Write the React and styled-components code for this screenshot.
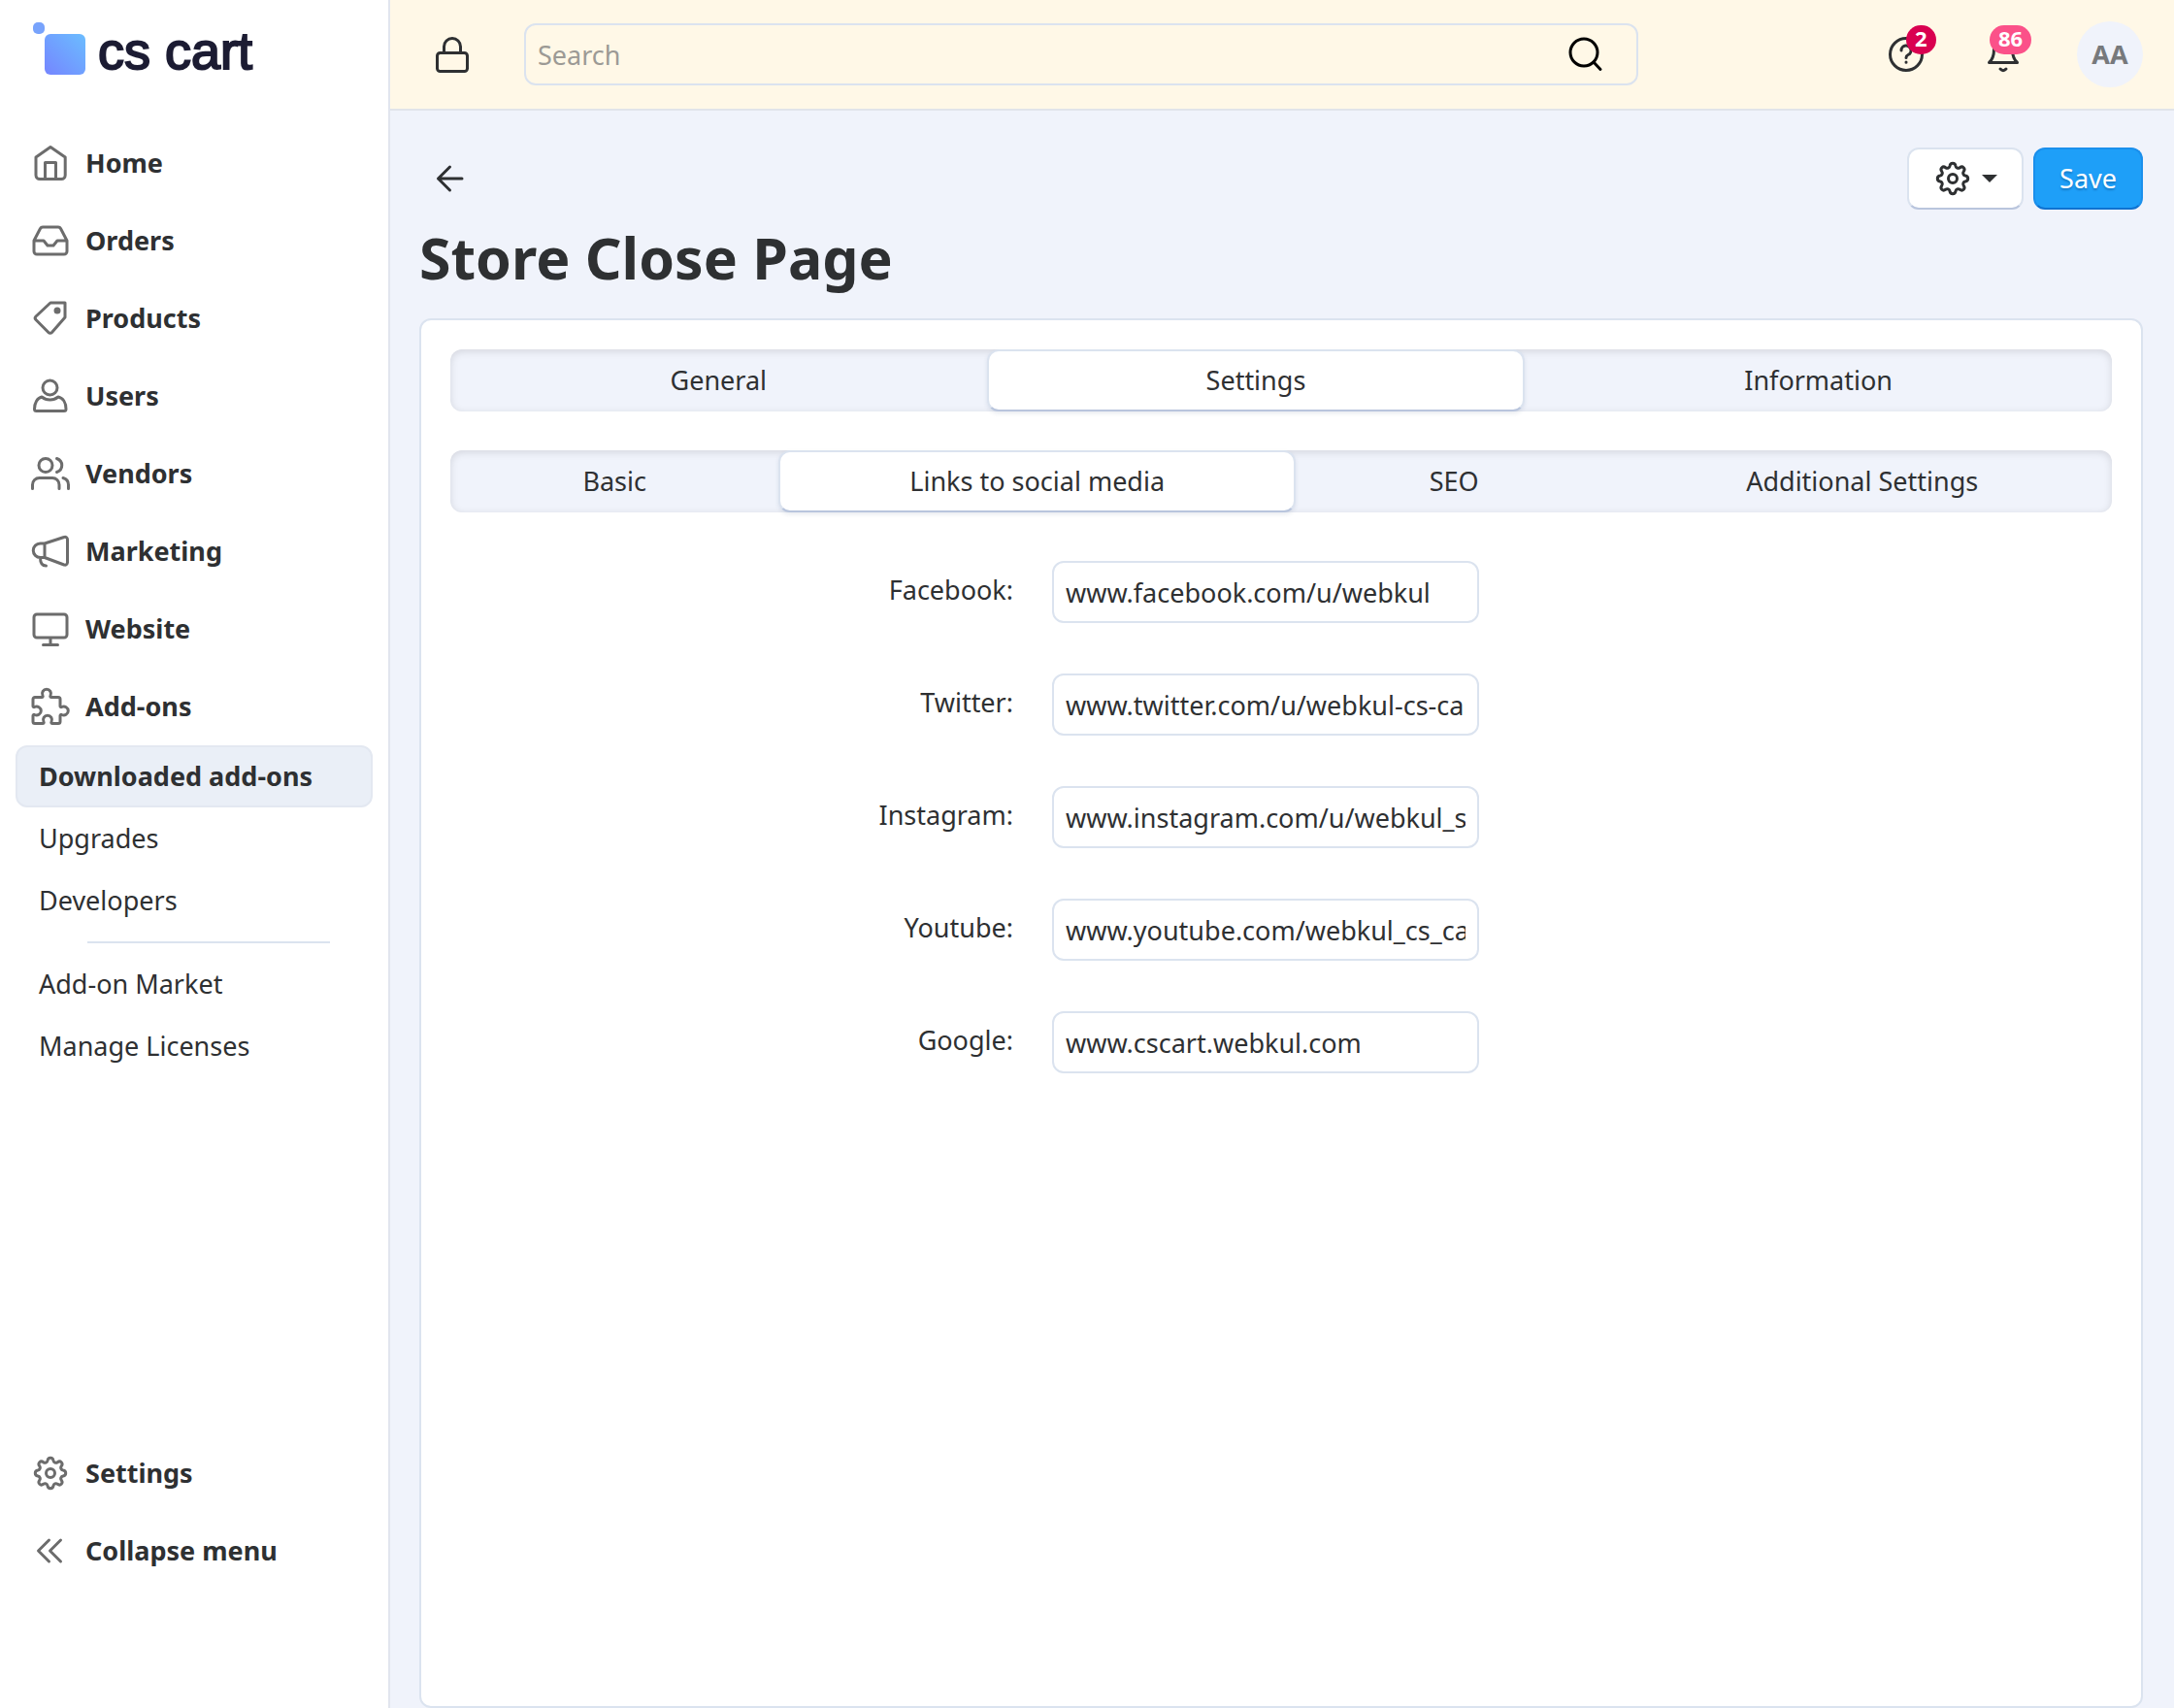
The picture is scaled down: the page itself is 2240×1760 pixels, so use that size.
import React from "react";
import styled, { createGlobalStyle, css } from "styled-components";

const INK = "#2e3032";
const BORDER = "#dbe3ef";
const SURFACE = "#f0f3fb";

const GlobalStyle = createGlobalStyle`
  *, *::before, *::after { box-sizing: border-box; }
  html, body { margin: 0; }
  body, button, input {
    font-family: "Noto Sans", "Open Sans", sans-serif;
    font-size: 27px;
    line-height: 38px;
    color: ${INK};
  }
  body { background: ${SURFACE}; }
`;

const Page = styled.div`
  display: flex;
  min-height: 100vh;
`;

const Sidebar = styled.aside`
  flex: none;
  width: 402px;
  padding: 0 16px 122px;
  display: flex;
  flex-direction: column;
  background: #fff;
  border-right: 2px solid #e1e5ee;
`;

const LogoLink = styled.a`
  display: flex;
  align-items: flex-start;
  height: 128px;
  padding: 20px 16px 0;
  text-decoration: none;
`;

const LogoMark = styled.svg`
  flex: none;
  width: 60px;
  height: 60px;
`;

const LogoText = styled.span`
  padding-left: 9px;
  font-family: "Liberation Sans", Arial, sans-serif;
  font-size: 54px;
  line-height: 64px;
  color: #1c1c33;
  -webkit-text-stroke: 2px #1c1c33;
`;

const Nav = styled.nav`
  display: flex;
  flex-direction: column;
`;

const FooterNav = styled(Nav)`
  margin-top: auto;
`;

const navRow = css`
  display: flex;
  align-items: center;
  height: 80px;
  padding: 0 16px;
  border: 0;
  background: none;
  color: ${INK};
  font-weight: 700;
  text-align: left;
  text-decoration: none;
  cursor: pointer;
`;

const NavLink = styled.a`
  ${navRow}
`;

const NavButton = styled.button`
  ${navRow}
`;

const Icon = styled.svg`
  flex: none;
  width: 40px;
  height: 40px;
  fill: none;
  stroke: ${(p) => p.$color || "#6c6c6c"};
  stroke-width: 3;
  stroke-linecap: round;
  stroke-linejoin: round;
`;

const NavLabel = styled.span`
  padding-left: 16px;
`;

const SubLink = styled.a`
  display: flex;
  align-items: center;
  height: 64px;
  padding: 0 22px;
  border: 2px solid ${(p) => (p.$active ? "#e3e8f1" : "transparent")};
  border-radius: 12px;
  background: ${(p) => (p.$active ? "#eaeff7" : "transparent")};
  color: ${INK};
  font-weight: ${(p) => (p.$active ? 700 : 400)};
  text-decoration: none;
`;

const Divider = styled.hr`
  width: 250px;
  height: 2px;
  margin: 10px 0 10px 74px;
  border: 0;
  background: ${BORDER};
`;

const Main = styled.div`
  flex: 1;
  min-width: 0;
  display: flex;
  flex-direction: column;
`;

const TopBar = styled.header`
  display: flex;
  align-items: center;
  height: 114px;
  padding: 0 32px 0 44px;
  background: #fff8e7;
  border-bottom: 2px solid #e1e4ea;
`;

const PlainButton = styled.button`
  display: flex;
  align-items: center;
  justify-content: center;
  position: relative;
  padding: 0;
  border: 0;
  background: none;
  cursor: pointer;
`;

const Search = styled.form`
  display: flex;
  align-items: center;
  flex: 0 1 1148px;
  height: 64px;
  margin: 0 auto 0 54px;
  padding-right: 34px;
  border: 2px solid ${BORDER};
  border-radius: 12px;
`;

const SearchInput = styled.input`
  flex: 1;
  min-width: 0;
  height: 60px;
  padding: 0 12px;
  border: 0;
  background: none;
  outline: 0;
  &::placeholder { color: #9c9a95; opacity: 1; }
`;

const TopActions = styled.div`
  display: flex;
  align-items: center;
  gap: 60px;
`;

const Badge = styled.span`
  position: absolute;
  left: 20px;
  top: -10px;
  min-width: 30px;
  height: 30px;
  padding: 0 9px;
  border-radius: 15px;
  background: ${(p) => p.$color};
  color: #fff;
  font-size: 22px;
  line-height: 26px;
  font-weight: 700;
  text-align: center;
`;

const BellBadge = styled(Badge)`
  left: 6px;
`;

const Avatar = styled.button`
  width: 68px;
  height: 68px;
  padding: 0;
  margin-left: -4px;
  border: 0;
  border-radius: 50%;
  background: ${SURFACE};
  color: #77797c;
  font-weight: 700;
`;

const Content = styled.main`
  flex: 1;
  display: flex;
  flex-direction: column;
  padding: 38px 32px 0 30px;
`;

const Toolbar = styled.div`
  display: flex;
  align-items: center;
  justify-content: space-between;
`;

const BackLink = styled.a`
  display: flex;
  padding: 12px;
`;

const Actions = styled.div`
  display: flex;
  gap: 10px;
`;

const Button = styled.button`
  display: flex;
  align-items: center;
  gap: 10px;
  height: 64px;
  padding: 0 25px;
  border: 2px solid ${BORDER};
  border-bottom-color: #b9c5dd;
  border-radius: 12px;
  background: #fff;
  cursor: pointer;
`;

const SaveButton = styled(Button)`
  border-color: #1a8fec;
  border-bottom-color: #0f72d0;
  background: #1e9ff8;
  color: #fff;
  text-shadow: 0 2px 2px rgba(0, 40, 90, 0.3);
`;

const Caret = styled.span`
  border: 8px solid transparent;
  border-top-color: ${INK};
  border-bottom-width: 0;
`;

const Title = styled.h1`
  margin: 6px 0 20px;
  font-size: 59px;
  line-height: 86px;
  font-weight: 700;
`;

const Card = styled.section`
  flex: 1;
  padding: 30px;
  border: 2px solid ${BORDER};
  border-radius: 12px;
  background: #fff;
`;

const Tabs = styled.div`
  display: grid;
  grid-template-columns: ${(p) => p.$columns};
  height: 64px;
  margin-bottom: 40px;
  border-radius: 12px;
  background: ${SURFACE};
  box-shadow: inset 0 2px 8px rgba(0, 0, 0, 0.12);
`;

const Tab = styled.button`
  padding: 0;
  border: 2px solid transparent;
  border-radius: 12px;
  background: none;
  cursor: pointer;
  ${(p) =>
    p.$active &&
    css`
      border-color: ${BORDER};
      border-bottom-color: #b9c5dd;
      background: #fff;
      box-shadow: 0 2px 4px rgba(60, 80, 120, 0.12);
    `}
`;

const Form = styled.form`
  display: grid;
  gap: 52px;
  padding-top: 10px;
`;

const Field = styled.div`
  display: grid;
  grid-template-columns: 580px 440px;
  column-gap: 40px;
`;

const Label = styled.label`
  padding-top: 11px;
  text-align: right;
`;

const TextInput = styled.input`
  width: 100%;
  height: 64px;
  padding: 0 12px;
  border: 2px solid ${BORDER};
  border-radius: 12px;
  background: #fff;
`;

const GEAR =
  "M20 4.3c1.7 0 2.7 1 3 2.7.4 2 2.5 3 4.3 1.7 1.5-1.1 2.8-1 3.9.1s1.2 2.4.1 3.9c-1.3 1.8-.3 3.9 1.7 4.3 1.7.3 2.7 1.3 2.7 3s-1 2.7-2.7 3c-2 .4-3 2.5-1.7 4.3 1.1 1.5 1 2.8-.1 3.9s-2.4 1.2-3.9.1c-1.8-1.3-3.9-.3-4.3 1.7-.3 1.7-1.3 2.7-3 2.7s-2.7-1-3-2.7c-.4-2-2.5-3-4.3-1.7-1.5 1.1-2.8 1-3.9-.1s-1.2-2.4-.1-3.9c1.3-1.8.3-3.9-1.7-4.3-1.7-.3-2.7-1.3-2.7-3s1-2.7 2.7-3c2-.4 3-2.5 1.7-4.3-1.1-1.5-1-2.8.1-3.9s2.4-1.2 3.9-.1c1.8 1.3 3.9.3 4.3-1.7.3-1.7 1.3-2.7 3-2.7z";

const icons = {
  home: <path d="M20 3.5 35.2 14v18.500a4 4 0 0 1-4 4H9a4 4 0 0 1-4-4V14zM14.500 36V19.500h11V36" />,
  orders: (
    <path d="M3 20 9.500 7.500A3 3 0 0 1 12 6h16a3 3 0 0 1 2.500 1.500L37 20v11a3 3 0 0 1-3 3H6a3 3 0 0 1-3-3zh10l4 5h6l4-5h10" />
  ),
  products: (
    <>
      <path d="M20 4h15v15L21.500 34.500a2.500 2.500 0 0 1-3.600 0L5 21.500a2.500 2.500 0 0 1 0-3.500z" />
      <circle cx="27" cy="12" r="2" fill="#6c6c6c" />
    </>
  ),
  users: (
    <path d="M19.500 4a7.500 7.500 0 1 0 0 15 7.500 7.500 0 0 0 0-15zM11 21c5 4 12 4 17 0 5 1 8 6 8 12.500a2 2 0 0 1-2 2H5.500a2 2 0 0 1-2-2C3.500 27 6.500 22 11 21z" />
  ),
  vendors: (
    <path d="M15 4.500a7 7 0 1 0 0 14 7 7 0 0 0 0-14zM1.500 35.500v-4a7 7 0 0 1 7-7H22a7 7 0 0 1 7 7v4M26.500 4.500c7 2.500 7 11.500 0 14M33 24.500c3.500 1 5.500 4 5.500 7v4" />
  ),
  marketing: (
    <path d="M14 12 34 5.500a2.500 2.500 0 0 1 3.500 2.300v24a2.500 2.500 0 0 1-3.500 2.200L14 26.500zH9.500a7.200 7.200 0 0 0 0 14.500H14M9.500 27c0 5 2 8 6 8" />
  ),
  website: (
    <path d="M6 5h28a3 3 0 0 1 3 3v18a3 3 0 0 1-3 3H6a3 3 0 0 1-3-3V8a3 3 0 0 1 3-3zM20 29v7M12.500 36.500h15" />
  ),
  addons: (
    <path d="M4 10.500h7c1 0 1.500-.8 1-1.700a4.500 4.500 0 1 1 8 0c-.5.900 0 1.700 1 1.700h7a2 2 0 0 1 2 2v7c0 1 .8 1.500 1.700 1a4.500 4.500 0 1 1 0 8c-.9-.5-1.700 0-1.700 1v6a2 2 0 0 1-2 2h-6c-1 0-1.500-.8-1-1.700a4.500 4.500 0 1 0-8 0c.5.900 0 1.700-1 1.700H4a2 2 0 0 1-2-2v-6c0-1 .8-1.500 1.700-1a4.500 4.500 0 1 0 0-8c-.9.500-1.700 0-1.700-1v-7a2 2 0 0 1 2-2z" />
  ),
  settings: (
    <>
      <path d={GEAR} />
      <circle cx="20" cy="20" r="4.500" />
    </>
  ),
  collapse: <path d="M18.500 9 7.500 20l11 11M30.500 9l-11 11 11 11" />,
};

const NAV = [
  ["home", "Home"],
  ["orders", "Orders"],
  ["products", "Products"],
  ["users", "Users"],
  ["vendors", "Vendors"],
  ["marketing", "Marketing"],
  ["website", "Website"],
  ["addons", "Add-ons"],
];

const FIELDS = [
  ["facebook", "Facebook:", "www.facebook.com/u/webkul"],
  ["twitter", "Twitter:", "www.twitter.com/u/webkul-cs-cart"],
  ["instagram", "Instagram:", "www.instagram.com/u/webkul_social"],
  ["youtube", "Youtube:", "www.youtube.com/webkul_cs_cart"],
  ["google", "Google:", "www.cscart.webkul.com"],
];

function Glyph({ name, color }) {
  return (
    <Icon viewBox="0 0 40 40" $color={color} aria-hidden="true">
      {icons[name]}
    </Icon>
  );
}

function TabRow({ label, columns, items, active }) {
  return (
    <Tabs role="tablist" aria-label={label} $columns={columns}>
      {items.map((item) => (
        <Tab key={item} type="button" role="tab" aria-selected={item === active} $active={item === active}>
          {item}
        </Tab>
      ))}
    </Tabs>
  );
}

export default function App() {
  return (
    <>
      <GlobalStyle />
      <Page>
        <Sidebar>
          <LogoLink href="#">
            <LogoMark viewBox="0 0 60 60" aria-hidden="true">
              <defs>
                <linearGradient id="mark" x1="0" y1="1" x2="1" y2="0">
                  <stop offset="0" stopColor="#7585ff" />
                  <stop offset="1" stopColor="#6bbdff" />
                </linearGradient>
              </defs>
              <rect x="2" y="3" width="12" height="12" rx="5" fill="#78a3fc" />
              <rect x="14" y="15" width="42" height="42" rx="6" fill="url(#mark)" />
            </LogoMark>
            <LogoText>cs cart</LogoText>
          </LogoLink>
          <Nav aria-label="Main">
            {NAV.map(([icon, label]) => (
              <NavLink key={icon} href="#">
                <Glyph name={icon} />
                <NavLabel>{label}</NavLabel>
              </NavLink>
            ))}
            <SubLink href="#" $active>Downloaded add-ons</SubLink>
            <SubLink href="#">Upgrades</SubLink>
            <SubLink href="#">Developers</SubLink>
            <Divider />
            <SubLink href="#">Add-on Market</SubLink>
            <SubLink href="#">Manage Licenses</SubLink>
          </Nav>
          <FooterNav aria-label="Secondary">
            <NavLink href="#">
              <Glyph name="settings" />
              <NavLabel>Settings</NavLabel>
            </NavLink>
            <NavButton type="button">
              <Glyph name="collapse" />
              <NavLabel>Collapse menu</NavLabel>
            </NavButton>
          </FooterNav>
        </Sidebar>
        <Main>
          <TopBar>
            <PlainButton type="button" aria-label="Store status">
              <Icon viewBox="0 0 40 40" $color={INK}>
                <path d="M7.500 18.500h25a3 3 0 0 1 3 3v13a3 3 0 0 1-3 3h-25a3 3 0 0 1-3-3v-13a3 3 0 0 1 3-3zM11.500 18v-6a8.500 8.500 0 0 1 17 0v6" />
              </Icon>
            </PlainButton>
            <Search role="search">
              <SearchInput type="text" placeholder="Search" aria-label="Search" />
              <PlainButton type="button" aria-label="Run search">
                <Icon viewBox="0 0 40 40" $color="#000">
                  <circle cx="20" cy="18" r="14" />
                  <path d="m30 28 7 7.500" />
                </Icon>
              </PlainButton>
            </Search>
            <TopActions>
              <PlainButton type="button" aria-label="Help">
                <Icon viewBox="0 0 40 40" $color={INK}>
                  <circle cx="20" cy="20" r="16.500" />
                  <path d="M15 16a5 5 0 1 1 7 4.500c-1.500.7-2 1.500-2 3M20 28v.2" />
                </Icon>
                <Badge $color="#d90050">2</Badge>
              </PlainButton>
              <PlainButton type="button" aria-label="Notifications">
                <Icon viewBox="0 0 40 40" $color={INK}>
                  <path d="M20 4c-7 0-9.500 5-9.500 11 0 6-1 10-5 13.500h29c-4-3.500-5-7.500-5-13.500 0-6-2.500-11-9.500-11z" />
                  <path d="M17 35c2 2.200 4 2.200 6 0" />
                </Icon>
                <BellBadge $color="#fb5189">86</BellBadge>
              </PlainButton>
              <Avatar type="button">AA</Avatar>
            </TopActions>
          </TopBar>
          <Content>
            <Toolbar>
              <BackLink href="#" aria-label="Back">
                <Icon viewBox="0 0 40 40" $color={INK}>
                  <path d="M32 20H7.500M19.500 8 7.500 20l12 12" />
                </Icon>
              </BackLink>
              <Actions>
                <Button type="button" aria-label="Tools">
                  <Glyph name="settings" color={INK} />
                  <Caret />
                </Button>
                <SaveButton type="button">Save</SaveButton>
              </Actions>
            </Toolbar>
            <Title>Store Close Page</Title>
            <Card>
              <TabRow
                label="Sections"
                columns="552fr 554fr 604fr"
                items={["General", "Settings", "Information"]}
                active="Settings"
              />
              <TabRow
                label="Setting groups"
                columns="338fr 532fr 326fr 514fr"
                items={["Basic", "Links to social media", "SEO", "Additional Settings"]}
                active="Links to social media"
              />
              <Form>
                {FIELDS.map(([id, label, value]) => (
                  <Field key={id}>
                    <Label htmlFor={id}>{label}</Label>
                    <TextInput id={id} type="text" defaultValue={value} />
                  </Field>
                ))}
              </Form>
            </Card>
          </Content>
        </Main>
      </Page>
    </>
  );
}
